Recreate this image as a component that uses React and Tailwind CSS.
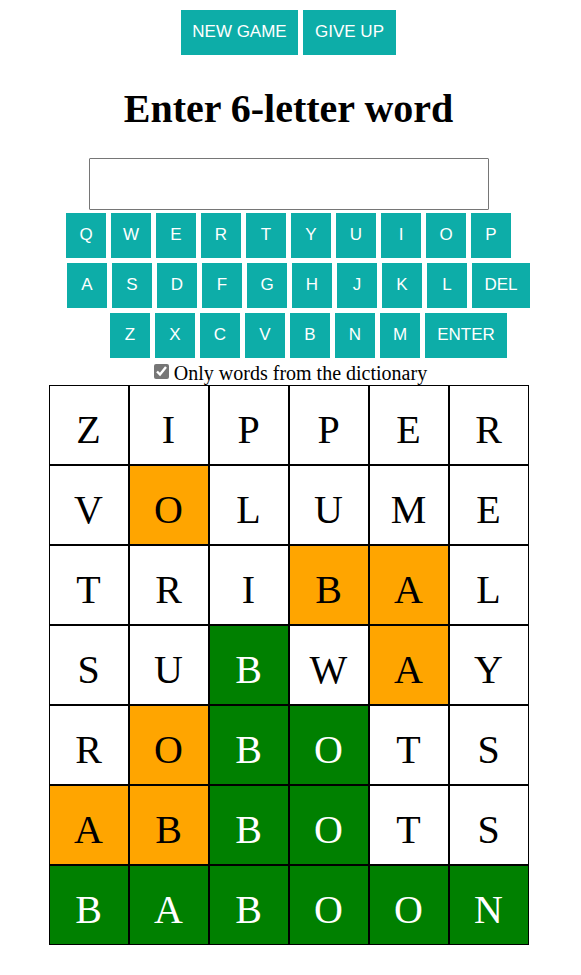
import { useState } from "react";

const KEY_ROWS = [
  { keys: ["Q", "W", "E", "R", "T", "Y", "U", "I", "O", "P"], indent: "" },
  { keys: ["A", "S", "D", "F", "G", "H", "J", "K", "L", "DEL"], indent: "pl-5" },
  { keys: ["Z", "X", "C", "V", "B", "N", "M", "ENTER"], indent: "pl-10" },
];

const WIDE_KEYS = {
  DEL: "w-[58px]",
  ENTER: "w-[82px]",
};

// w = letter absent, o = wrong position, g = right position
const GUESSES = [
  { word: "ZIPPER", marks: "wwwwww" },
  { word: "VOLUME", marks: "wowwww" },
  { word: "TRIBAL", marks: "wwwoow" },
  { word: "SUBWAY", marks: "wwgwow" },
  { word: "ROBOTS", marks: "woggww" },
  { word: "ABBOTS", marks: "ooggww" },
  { word: "BABOON", marks: "gggggg" },
];

const MARK_STYLES = {
  w: "bg-white text-black",
  o: "bg-[#ffa500] text-black",
  g: "bg-[#008000] text-white",
};

function Button({ children, onClick, width = "w-10" }) {
  return (
    <button
      type="button"
      onClick={onClick}
      className={`h-[45px] cursor-pointer bg-[#0dada8] pb-0.5 text-center font-['Liberation_Sans',Arial,sans-serif] text-[17px] whitespace-nowrap text-white ${width}`}
    >
      {children}
    </button>
  );
}

export default function App() {
  const [guess, setGuess] = useState("");
  const [dictionaryOnly, setDictionaryOnly] = useState(true);

  const press = (key) => {
    if (key === "DEL") setGuess(guess.slice(0, -1));
    else if (key !== "ENTER" && guess.length < 6) setGuess(guess + key);
  };

  return (
    <main className="flex min-h-screen flex-col items-center bg-white pt-2.5 pr-1 pb-7 font-['Liberation_Serif','Times_New_Roman',serif] text-black">
      <div className="flex justify-center gap-[5px]">
        <Button width="w-[117px]">NEW GAME</Button>
        <Button width="w-[93px]">GIVE UP</Button>
      </div>

      <h1 className="mt-[30px] mb-[26px] text-center text-[40px] leading-[47px] font-bold">
        Enter 6-letter word
      </h1>

      <input
        type="text"
        aria-label="Enter 6-letter word"
        value={guess}
        maxLength={6}
        onChange={(e) => setGuess(e.target.value.toUpperCase())}
        className="h-[52px] w-[400px] max-w-full rounded-[1px] border border-[#767676] bg-white text-center text-[40px]"
      />

      <div className="mt-[3px] flex flex-col items-center gap-[5px]">
        {KEY_ROWS.map((row) => (
          <div key={row.keys[0]} className={`flex gap-[5px] ${row.indent}`}>
            {row.keys.map((key) => (
              <Button key={key} width={WIDE_KEYS[key]} onClick={() => press(key)}>
                {key}
              </Button>
            ))}
          </div>
        ))}
      </div>

      <label className="flex items-start gap-[5px] pt-1 pl-1 text-[20px] leading-[23px]">
        <input
          type="checkbox"
          checked={dictionaryOnly}
          onChange={(e) => setDictionaryOnly(e.target.checked)}
          className="mt-0.5 size-[15px] accent-[#767676]"
        />
        Only words from the dictionary
      </label>

      <div className="grid grid-cols-6">
        {GUESSES.map(({ word, marks }) =>
          word.split("").map((letter, i) => (
            <div
              key={word + i}
              className={`flex size-20 items-center justify-center border border-black pt-2.5 text-[40px] leading-[46px] ${MARK_STYLES[marks[i]]}`}
            >
              {letter}
            </div>
          ))
        )}
      </div>
    </main>
  );
}
